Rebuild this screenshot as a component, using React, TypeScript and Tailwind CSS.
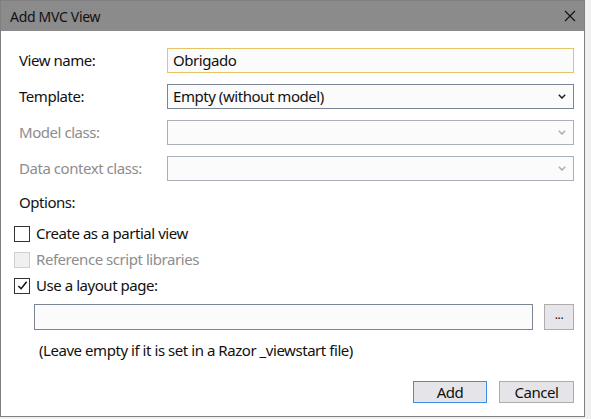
import React from 'react';

const font = { fontFamily: '"Noto Sans", "Open Sans", Arial, sans-serif' };

const Chevron = ({ dim }: { dim?: boolean }) => (
  <svg width="8" height="5" viewBox="0 0 8 5" className="shrink-0">
    <polyline
      points="0.8,0.8 4,4 7.2,0.8"
      fill="none"
      stroke={dim ? '#a9adb3' : '#1e1e1e'}
      strokeWidth="1.5"
    />
  </svg>
);

const Check = ({ checked, disabled, label }: { checked?: boolean; disabled?: boolean; label: string }) => (
  <div className="flex items-center h-[26px]">
    <div
      className={`w-[16px] h-[16px] border flex items-center justify-center ${
        disabled ? 'border-[#cfcfcf] bg-[#f0f0f0]' : 'border-[#333] bg-white'
      }`}
    >
      {checked && (
        <svg width="11" height="11" viewBox="0 0 12 12">
          <polyline points="1.5,6.5 4.5,9.5 10.5,2" fill="none" stroke="#111" strokeWidth="1.7" />
        </svg>
      )}
    </div>
    <span className={`ml-[6px] ${disabled ? 'text-[#8d8d8d]' : 'text-[#111]'}`}>{label}</span>
  </div>
);

export default function App() {
  return (
    <div className="w-[591px] h-[419px] bg-[#f0f0f0] overflow-hidden tracking-[-0.45px]" style={font}>
      <div className="w-[585px] h-[417px] border border-[#7f7f7f] bg-white flex flex-col">
        {/* Title bar */}
        <div className="h-[30px] bg-[#8b8b8b] flex items-center justify-between pl-[9px] pr-[8px] shrink-0">
          <span className="text-[14px] text-[#111] tracking-[-0.3px]">Add MVC View</span>
          <svg width="12" height="12" viewBox="0 0 12 12">
            <path d="M1 1 L11 11 M11 1 L1 11" stroke="#111" strokeWidth="1.1" />
          </svg>
        </div>

        {/* Body */}
        <div className="flex-1 flex flex-col pl-[18px] pr-[10px] pt-[17px] text-[15px]">
          <div className="grid grid-cols-[148px_1fr] gap-y-[11px] items-center">
            <span className="text-[#111]">View name:</span>
            <div className="h-[25px] border border-[#e6c464] bg-[#fbfbfb] flex items-center px-[5px] text-[#111]">
              Obrigado
            </div>

            <span className="text-[#111]">Template:</span>
            <div className="h-[25px] border border-[#7a8494] bg-[#fbfbfb] flex items-center justify-between pl-[5px] pr-[7px] text-[#111]">
              <span>Empty (without model)</span>
              <Chevron />
            </div>

            <span className="text-[#8d8d8d]">Model class:</span>
            <div className="h-[25px] border border-[#a9b0ba] bg-[#fbfbfb] flex items-center justify-end pr-[7px]">
              <Chevron dim />
            </div>

            <span className="text-[#8d8d8d]">Data context class:</span>
            <div className="h-[25px] border border-[#a9b0ba] bg-[#fbfbfb] flex items-center justify-end pr-[7px]">
              <Chevron dim />
            </div>
          </div>

          <div className="mt-[10px] text-[#111]">Options:</div>

          <div className="flex flex-col mt-[7px] -ml-[5px]">
            <Check label="Create as a partial view" />
            <Check label="Reference script libraries" disabled />
            <Check label="Use a layout page:" checked />
          </div>

          <div className="flex items-center mt-[5px] ml-[15px]">
            <div className="flex-1 h-[26px] border border-[#7a8494] bg-[#fbfbfb]" />
            <div className="ml-[11px] w-[30px] h-[26px] border border-[#adadad] bg-[#e6e6ea] flex items-center justify-center text-[12px] text-[#111] leading-none pb-[4px]">
              ...
            </div>
          </div>

          <div className="mt-[9px] ml-[20px] text-[#111]">
            (Leave empty if it is set in a Razor _viewstart file)
          </div>

          <div className="flex justify-end gap-[12px] mt-[20px]">
            <button className="w-[74px] h-[22px] border border-[#3b8fe6] bg-[#e5e5e9] text-[#111] flex items-center justify-center">
              Add
            </button>
            <button className="w-[75px] h-[22px] border border-[#adadad] bg-[#e5e5e9] text-[#111] flex items-center justify-center">
              Cancel
            </button>
          </div>
        </div>
      </div>
    </div>
  );
}
